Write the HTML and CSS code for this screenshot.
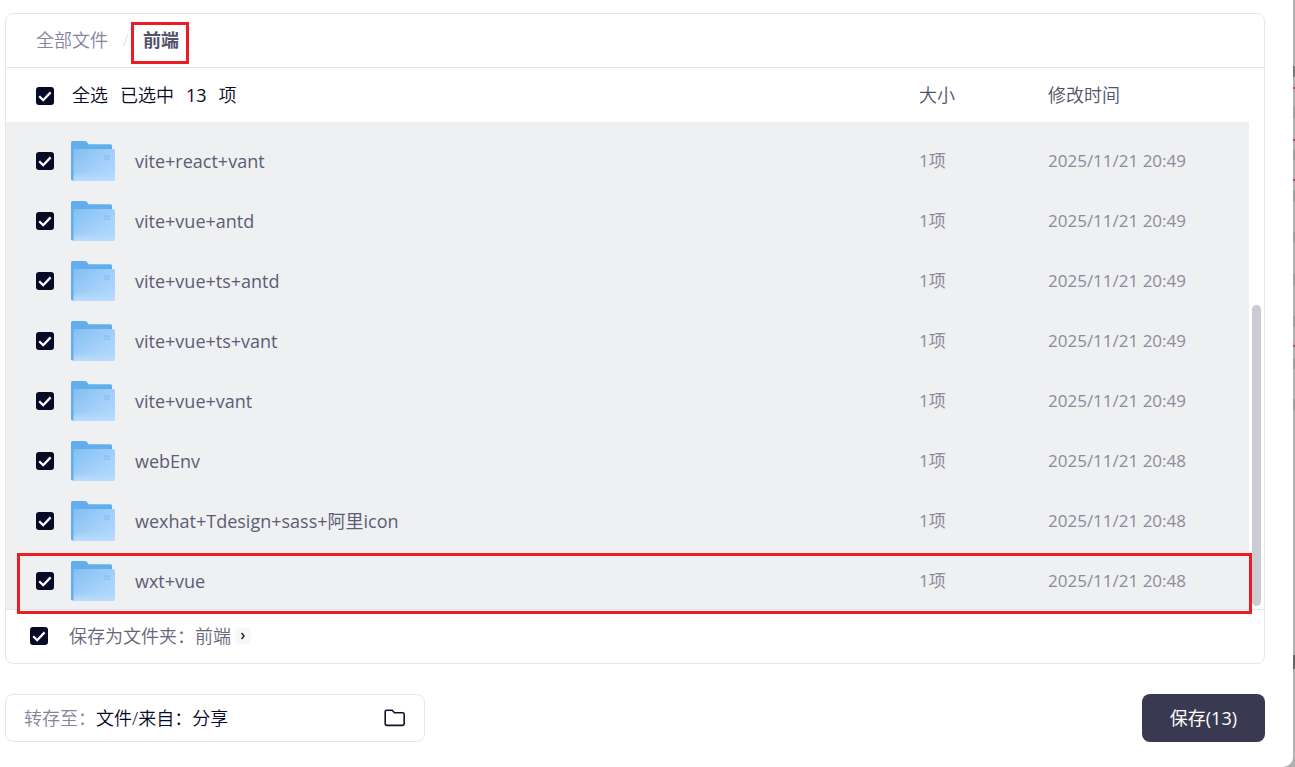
FILE: index.html
```html
<!DOCTYPE html>
<html lang="zh-CN">
<head>
    <meta charset="UTF-8">
    <meta name="viewport" content="width=device-width, initial-scale=1.0">
    <title>保存文件</title>
    <link rel="stylesheet" href="styles.css">
</head>
<body>

    <!-- Folder icon shared by every row -->
    <svg class="icon-defs" aria-hidden="true">
        <defs>
            <linearGradient id="folder-front" x1="0" y1="0" x2="1" y2="1">
                <stop offset="0" stop-color="#82bff1"/>
                <stop offset="0.6" stop-color="#a5d1fa"/>
                <stop offset="1" stop-color="#b2dafc"/>
            </linearGradient>
            <linearGradient id="folder-shine" x1="0" y1="0" x2="0" y2="1">
                <stop offset="0" stop-color="#b9dcfd" stop-opacity="0"/>
                <stop offset="1" stop-color="#b9dcfd"/>
            </linearGradient>
            <symbol id="folder" viewBox="0 0 44 40">
                <path d="M1.5 0H14q1.2 0 2 1l1.6 2.3H39.5q1.5 0 1.5 1.5V39.5H1.5Q0 39.5 0 38V1.5Q0 0 1.5 0z" fill="#62aeec"/>
                <rect x="2.5" y="8" width="41.5" height="32" rx="2" fill="url(#folder-front)"/>
                <rect x="2.5" y="31" width="41.5" height="9" rx="2" fill="url(#folder-shine)"/>
                <path d="M33 15h5.5M33 18h5.5" stroke="#7bb9ef" stroke-width="1"/>
                <path d="M33.5 14.5v4M38 14.5v4" stroke="#8cc4f4" stroke-width="0.6"/>
            </symbol>
        </defs>
    </svg>

    <main class="dialog">

        <section class="file-card">
            <nav class="breadcrumb">
                <a href="#">全部文件</a>
                <span class="separator">/</span>
                <a href="#" class="current">前端</a>
            </nav>

            <!-- File list -->
            <div class="file-list">
                <table class="file-table">
                    <thead>
                        <tr>
                            <th class="col-check"><input type="checkbox" id="check-all" checked></th>
                            <th class="col-name"><label for="check-all"><span>全选</span><span>已选中</span><span class="count">13</span><span>项</span></label></th>
                            <th class="col-size">大小</th>
                            <th class="col-time">修改时间</th>
                        </tr>
                    </thead>
                    <tbody>
                        <tr>
                            <td class="col-check"><input type="checkbox" id="file-1" checked></td>
                            <td><label class="file-name" for="file-1"><svg class="folder"><use href="#folder"/></svg>vite+react+vant</label></td>
                            <td>1项</td>
                            <td>2025/11/21 20:49</td>
                        </tr>
                        <tr>
                            <td class="col-check"><input type="checkbox" id="file-2" checked></td>
                            <td><label class="file-name" for="file-2"><svg class="folder"><use href="#folder"/></svg>vite+vue+antd</label></td>
                            <td>1项</td>
                            <td>2025/11/21 20:49</td>
                        </tr>
                        <tr>
                            <td class="col-check"><input type="checkbox" id="file-3" checked></td>
                            <td><label class="file-name" for="file-3"><svg class="folder"><use href="#folder"/></svg>vite+vue+ts+antd</label></td>
                            <td>1项</td>
                            <td>2025/11/21 20:49</td>
                        </tr>
                        <tr>
                            <td class="col-check"><input type="checkbox" id="file-4" checked></td>
                            <td><label class="file-name" for="file-4"><svg class="folder"><use href="#folder"/></svg>vite+vue+ts+vant</label></td>
                            <td>1项</td>
                            <td>2025/11/21 20:49</td>
                        </tr>
                        <tr>
                            <td class="col-check"><input type="checkbox" id="file-5" checked></td>
                            <td><label class="file-name" for="file-5"><svg class="folder"><use href="#folder"/></svg>vite+vue+vant</label></td>
                            <td>1项</td>
                            <td>2025/11/21 20:49</td>
                        </tr>
                        <tr>
                            <td class="col-check"><input type="checkbox" id="file-6" checked></td>
                            <td><label class="file-name" for="file-6"><svg class="folder"><use href="#folder"/></svg>webEnv</label></td>
                            <td>1项</td>
                            <td>2025/11/21 20:48</td>
                        </tr>
                        <tr>
                            <td class="col-check"><input type="checkbox" id="file-7" checked></td>
                            <td><label class="file-name" for="file-7"><svg class="folder"><use href="#folder"/></svg>wexhat+Tdesign+sass+阿里icon</label></td>
                            <td>1项</td>
                            <td>2025/11/21 20:48</td>
                        </tr>
                        <tr class="marked">
                            <td class="col-check"><input type="checkbox" id="file-8" checked></td>
                            <td><label class="file-name" for="file-8"><svg class="folder"><use href="#folder"/></svg>wxt+vue</label></td>
                            <td>1项</td>
                            <td>2025/11/21 20:48</td>
                        </tr>
                    </tbody>
                </table>
                <div class="scroll-track"><div class="scroll-thumb"></div></div>
            </div>

            <div class="save-as">
                <input type="checkbox" id="save-as" checked>
                <label for="save-as">保存为文件夹：前端</label>
                <button class="expand" aria-label="展开">
                    <svg width="6" height="8" viewBox="0 0 6 8"><path d="M1.5 1l2.5 3-2.5 3" fill="none" stroke="#1b1c33" stroke-width="1.4"/></svg>
                </button>
            </div>
        </section>

        <!-- Actions -->
        <div class="actions">
            <button class="target">
                <span class="target-label">转存至：</span>
                <span class="target-path">文件/来自：分享</span>
                <svg width="22" height="18" viewBox="0 0 22 18"><path d="M3 1.2h5.2l2.3 2.6H18.6q1.6 0 1.6 1.6v9.4q0 1.6-1.6 1.6H2.8q-1.6 0-1.6-1.6V2.8q0-1.6 1.8-1.6z" fill="none" stroke="#11132e" stroke-width="1.6" stroke-linejoin="round"/></svg>
            </button>
            <button class="save">保存(13)</button>
        </div>

    </main>

</body>
</html>
```
FILE: styles.css
```css
*,
*::after {
    box-sizing: border-box;
}

body {
    margin: 0;
    font-family: "Open Sans", "Noto Sans CJK SC", sans-serif;
    font-size: 18px;
    font-weight: 350;
    line-height: 24px;
    color: #50526a;
    background: #b1b1af linear-gradient(
        transparent 66px, #77777c 66px, #77777c 77px,
        transparent 77px, transparent 87px, #c9484c 87px, #c9484c 89px,
        transparent 89px, transparent 107px, #a0a0a0 107px, #a0a0a0 118px,
        transparent 118px, transparent 139px, #c9484c 139px, #c9484c 141px,
        transparent 141px, transparent 149px, #a0a0a0 149px, #a0a0a0 160px,
        transparent 160px, transparent 179px, #c9484c 179px, #c9484c 181px,
        transparent 181px, transparent 190px, #a0a0a0 190px, #a0a0a0 202px,
        transparent 202px, transparent 232px, #a0a0a0 232px, #a0a0a0 243px,
        transparent 243px, transparent 274px, #a0a0a0 274px, #a0a0a0 285px,
        transparent 285px, transparent 316px, #a0a0a0 316px, #a0a0a0 327px,
        transparent 327px, transparent 345px, #c9484c 345px, #c9484c 347px,
        transparent 347px, transparent 358px, #a0a0a0 358px, #a0a0a0 369px,
        transparent 369px, transparent 399px, #a0a0a0 399px, #a0a0a0 411px,
        transparent 411px, transparent 655px, #666 655px, #666 669px,
        transparent 669px);
}

button {
    font: inherit;
    border: none;
    padding: 0;
    cursor: pointer;
}

svg {
    flex: none;
}

.icon-defs {
    position: absolute;
    width: 0;
    height: 0;
}

.dialog {
    display: flex;
    flex-direction: column;
    gap: 30px;
    min-height: 100vh;
    margin-right: 2px;
    padding: 13px 28px 25px 5px;
    background-color: white;
    border-bottom-right-radius: 10px;
}

.file-card {
    border: 1px solid #e5e6e8;
    border-radius: 8px;
}

/* Breadcrumb */
.breadcrumb {
    display: flex;
    align-items: center;
    height: 54px;
    padding-left: 30px;
    padding-bottom: 2px;
    border-bottom: 1px solid #e5e6e8;
}

.breadcrumb a {
    color: #84859a;
    text-decoration: none;
}

.breadcrumb .separator {
    width: 35px;
    text-align: center;
    color: #dcdde2;
}

.breadcrumb .current {
    position: relative;
    color: #50526a;
    font-weight: bold;
}

.breadcrumb .current::after {
    content: "";
    position: absolute;
    top: -6px;
    right: -10px;
    bottom: -12px;
    left: -12px;
    border: 3px solid #ed1c24;
}

/* Checkbox */
input[type="checkbox"] {
    appearance: none;
    display: block;
    flex: none;
    width: 18px;
    height: 18px;
    margin: 0;
    border: 1px solid #b5b6c3;
    border-radius: 3px;
    cursor: pointer;
}

input[type="checkbox"]:checked {
    border: none;
    background: #060a26 url("data:image/svg+xml,%3Csvg xmlns='http://www.w3.org/2000/svg' viewBox='0 0 18 18'%3E%3Cpath d='M3.2 9.2l4 4 7.4-7.8' fill='none' stroke='white' stroke-width='2.3'/%3E%3C/svg%3E");
}

/* Table */
.file-list {
    display: flex;
}

.file-table {
    flex: 1;
    table-layout: fixed;
    border-collapse: collapse;
}

.file-table th,
.file-table td {
    padding: 0;
    text-align: left;
}

.file-table th {
    height: 54px;
    font-weight: 350;
}

.file-table .col-check {
    width: 65px;
    padding-left: 30px;
}

.file-table thead .col-check {
    padding-top: 2px;
}

.file-table .col-size {
    width: 129px;
}

.file-table .col-time {
    width: 201px;
}

.col-name label {
    display: flex;
    align-items: baseline;
    gap: 12px;
    padding-left: 1px;
    color: #060a26;
}

.count {
    font-weight: 400;
}

.file-table tbody {
    background-color: #eff0f2;
}

.file-table td {
    height: 60px;
    font-size: 17px;
    font-weight: 400;
    color: #8b8c9b;
}

.file-table tbody tr:first-child td {
    height: 69px;
    padding-top: 9px;
}

.file-table tbody tr:last-child td {
    height: 58px;
    padding-top: 2px;
}

.file-name {
    display: flex;
    align-items: center;
    gap: 20px;
    font-size: 18px;
    color: #5b5d73;
}

.folder {
    width: 44px;
    height: 40px;
}

.marked {
    position: relative;
}

.marked::after {
    content: "";
    position: absolute;
    top: 2px;
    right: -3px;
    bottom: -5px;
    left: 11px;
    border: 3px solid #ed1c24;
}

.scroll-track {
    display: flex;
    flex-direction: column;
    justify-content: flex-end;
    width: 15px;
    padding: 0 3px;
    padding-bottom: 3px;
}

.scroll-thumb {
    width: 9px;
    height: 56%;
    border-radius: 5px;
    background-color: #cbccd2;
}

.save-as {
    display: flex;
    align-items: center;
    height: 54px;
    padding-left: 24px;
    padding-bottom: 2px;
    border-top: 1px solid #e5e6e8;
}

.save-as label {
    margin-left: 21px;
    margin-right: 4px;
    color: #65667a;
}

.expand {
    display: flex;
    align-items: center;
    justify-content: center;
    width: 16px;
    height: 16px;
    border-radius: 4px;
    background-color: #f6f6f7;
}

/* Actions */
.actions {
    display: flex;
    justify-content: space-between;
}

.target {
    display: flex;
    align-items: center;
    width: 420px;
    height: 48px;
    padding: 0 18px;
    border: 1px solid #e5e6e8;
    border-radius: 8px;
    background-color: white;
}

.target-label {
    color: #84859a;
}

.target-path {
    flex: 1;
    text-align: left;
    color: #060a26;
}

.save {
    padding: 0 28px;
    border-radius: 8px;
    background-color: #393a52;
    color: white;
    font-weight: 400;
}
```
